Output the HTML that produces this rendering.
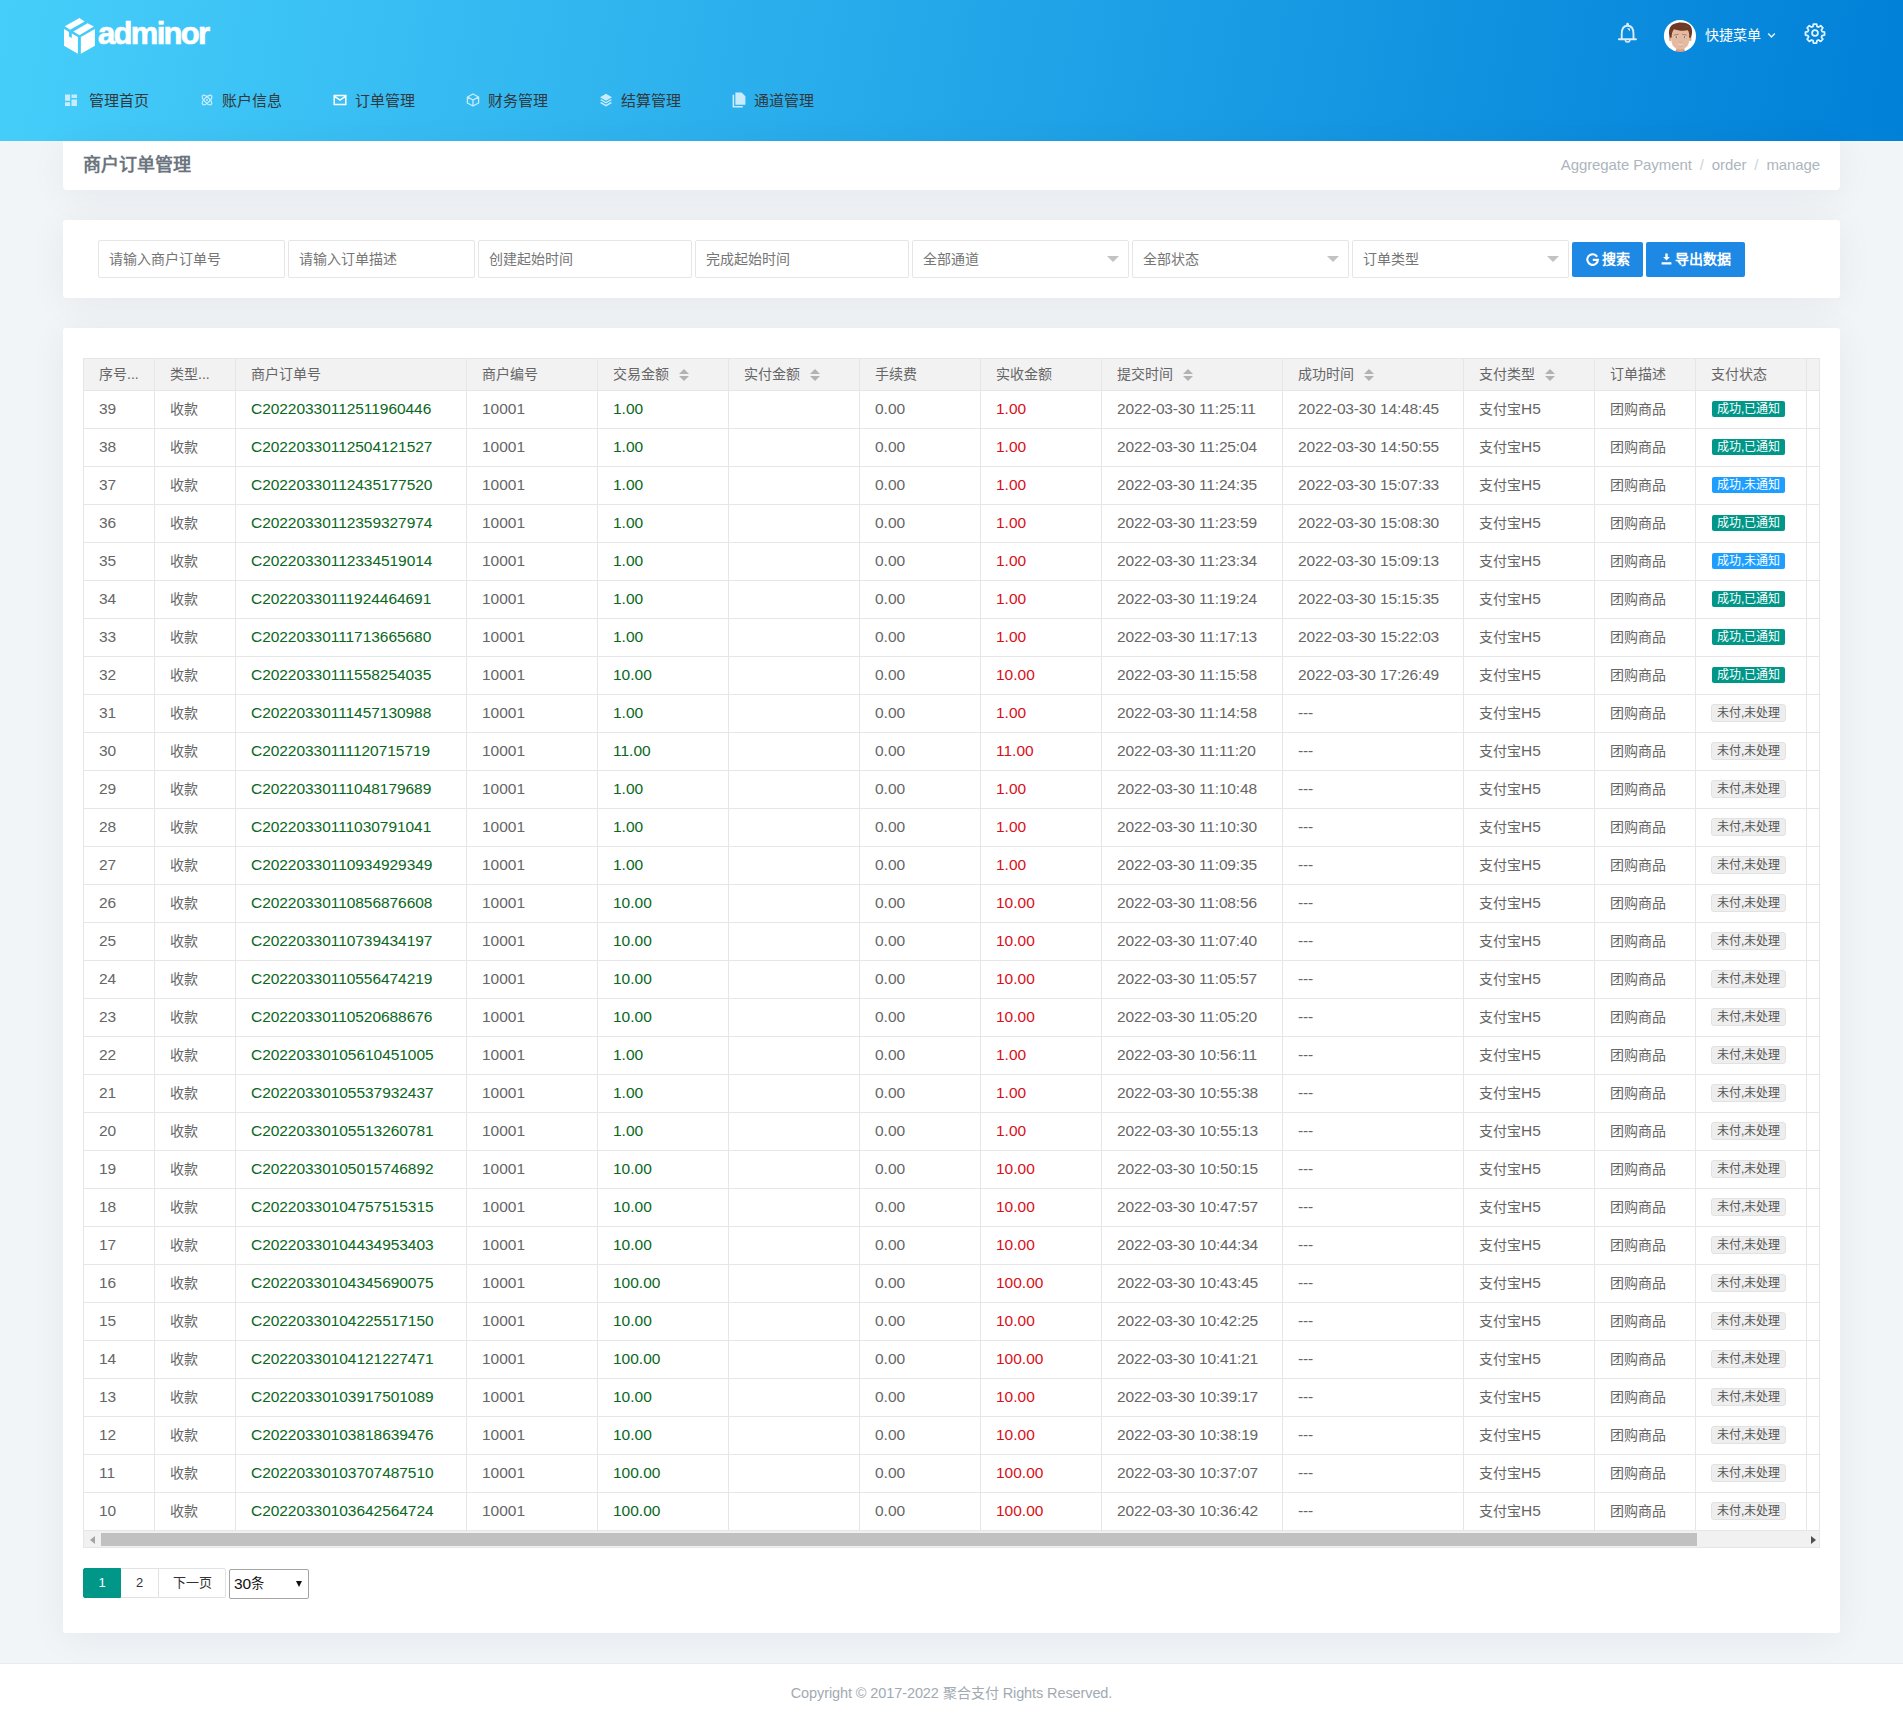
<!DOCTYPE html>
<html lang="zh-CN">
<head>
<meta charset="utf-8">
<title>商户订单管理</title>
<style>
*{box-sizing:border-box}
html,body{margin:0;padding:0}
body{width:1903px;height:1723px;position:relative;overflow:hidden;background:#f1f5f8;
  font-family:"Liberation Sans",sans-serif;font-size:14px;color:#666;}
.abs{position:absolute}
/* header */
#hdr{position:absolute;left:0;top:0;width:1903px;height:141px;
  background:linear-gradient(100deg,#46cefa 0%,#0180d8 100%);}
#logo-ic{position:absolute;left:63px;top:17px;width:33px;height:38px}
#logo-tx{position:absolute;left:98px;top:14px;font-weight:bold;font-size:31px;line-height:40px;color:#fff;letter-spacing:-1.7px;white-space:nowrap;-webkit-text-stroke:.7px #fff}
.nav{position:absolute;top:90px;height:22px;line-height:22px;font-size:15px;color:#33383c;white-space:nowrap}
.nav svg{position:absolute;top:3.3px;left:-22.5px;width:14px;height:14px;overflow:visible}
.nav.first svg{left:-25px}
#user-tx{position:absolute;left:1705px;top:25px;line-height:20px;font-size:14px;color:#fff;white-space:nowrap}
/* cards */
.card{position:absolute;left:63px;width:1777px;background:#fff;border-radius:3px;
  box-shadow:0 5px 38px rgba(20,25,30,.054);}
#bc{top:141px;height:49px;border-radius:0 0 4px 4px}
#bc h4{position:absolute;left:20px;top:12px;margin:0;font-size:18px;line-height:24px;font-weight:bold;color:#6c757d}
#crumb{position:absolute;right:20px;top:13px;font-size:15px;line-height:22px;color:#adb5bd;white-space:nowrap;letter-spacing:-.1px}
#crumb i{font-style:normal;color:#ced4da;padding:0 8px}
#flt{top:220px;height:78px}
.inp{position:absolute;top:20px;height:38px;border:1px solid #e6e6e6;border-radius:2px;background:#fff;
  line-height:36px;padding-left:10px;font-size:14px;color:#757575;white-space:nowrap}
.sel:after{content:"";position:absolute;right:9px;top:15px;border:6px solid transparent;border-top-color:#c2c2c2;border-bottom-width:0}
.btn{position:absolute;top:22px;height:35px;border-radius:2px;background:#1e88e5;color:#fff;font-size:14px;line-height:35px;text-align:center;font-weight:bold;white-space:nowrap}
#tb{top:328px;height:1305px}
/* table */
#tw{position:absolute;left:20px;top:30px;width:1737px;height:1190px;border:1px solid #e6e6e6;overflow:hidden;background:#fff}
table{border-collapse:separate;border-spacing:0;table-layout:fixed;width:1736px;position:absolute;left:0;top:0}
th,td{border-right:1px solid #e6e6e6;border-bottom:1px solid #e6e6e6;padding:0 0 2px 15px;text-align:left;
  white-space:nowrap;overflow:hidden;font-weight:normal;font-size:14px;color:#666}
th{height:32px;background:#f2f2f2;line-height:20px;position:relative;vertical-align:middle}
td{height:38px;line-height:20px;vertical-align:middle}
td.d,span.d{font-size:15.5px}
td.on{letter-spacing:-.05px}
td.dt{letter-spacing:-.15px}
td.gr{color:#0a671d}
td.rd{color:#d8101a}
th.last,td.last{border-right:0;padding:0}
.srt{display:inline-block;position:relative;width:10px;height:14px;margin-left:10px;vertical-align:-3px}
.srt:before,.srt:after{content:"";position:absolute;left:0;border:5px solid transparent}
.srt:before{top:-4px;border-bottom-color:#b2b2b2}
.srt:after{top:8px;border-top-color:#b2b2b2}
.bd{display:inline-block;height:16px;line-height:16px;padding:0 5px;font-size:12px;border-radius:2px;color:#fff;vertical-align:top;margin:2px 1px 0 1px}
.bg{background:#009688}
.bb{background:#1e9fff}
.bn{background:#eee;color:#555;border:1px solid #e2e2e2;height:18px;line-height:16px;margin:1px 0 0 0;border-radius:3px;padding:0 5px}
/* scrollbar */
#sb{position:absolute;left:0;top:1172px;width:1735px;height:16px;background:#f1f1f1}
#sb .th{position:absolute;left:17px;top:2px;width:1596px;height:13px;background:#c1c1c1}
#sb .la,#sb .ra{position:absolute;top:5px;border:4px solid transparent}
#sb .la{left:6px;border-right-color:#a3a3a3;border-left-width:0;border-right-width:5px}
#sb .ra{right:3px;border-left-color:#505050;border-right-width:0;border-left-width:5px}
/* pager */
.pg{position:absolute;top:1240px;height:30px;line-height:28px;border:1px solid #e2e2e2;background:#fff;font-size:13px;color:#333;text-align:center}
#pgsel{position:absolute;left:166px;top:1241px;width:80px;height:30px;border:1px solid #a3a3a3;border-radius:2px;background:#fff;color:#111;font-size:13.3px;line-height:28px;padding-left:4px}
#pgsel b{font-weight:normal;font-size:15.5px;vertical-align:-1px}
#pgsel:after{content:"";position:absolute;right:6px;top:11px;border:3.5px solid transparent;border-top:6px solid #111;border-bottom-width:0}
/* footer */
#ft{position:absolute;left:0;top:1663px;width:1903px;height:60px;background:#fff;border-top:1px solid #e9ecef;
  text-align:center;font-size:14.5px;line-height:59px;color:#a1aab2;letter-spacing:-.1px}
#ft span{display:inline-block}
</style>
</head>
<body>
<div id="hdr">
  <svg id="logo-ic" viewBox="0 0 33 38"><path fill="#fff" d="M1.83 9.35 L16.45 0.99 L21.61 4.47 L7.12 12.83 Z M10.32 14.5 L24.53 6.15 L30.94 9.49 L16.45 18.13 Z M0.99 12 L6 14.9 L6 19.52 L8.79 21.05 L8.79 16.52 L14.92 20.08 L14.92 36.8 L0.99 28.71 Z M17.85 20.08 L31.92 12 L31.92 28.71 L17.85 36.8 Z"/></svg>
  <div id="logo-tx">adminor</div>

  <div class="nav first" style="left:89px"><svg viewBox="0 0 14 14"><path fill="#c9ecfd" d="M1 1.6h5.1v6.2H1zM7.5 1.6H13v3.5H7.5zM7.5 6.6H13V13H7.5zM1 9.2H6.1V13H1z"/></svg>管理首页</div>
  <div class="nav" style="left:222px"><svg viewBox="0 0 14 14"><g fill="none" stroke="#c9ecfd" stroke-width="1.3"><ellipse cx="7" cy="7" rx="6.2" ry="2.6" transform="rotate(45 7 7)"/><ellipse cx="7" cy="7" rx="6.2" ry="2.6" transform="rotate(-45 7 7)"/></g><circle cx="7" cy="7" r="1" fill="#c9ecfd"/></svg>账户信息</div>
  <div class="nav" style="left:355px"><svg viewBox="0 0 14 14"><path fill="none" stroke="#fff" stroke-width="1.5" d="M1.2 2.6h11.6v8.8H1.2z M1.6 3.4 L7 7.2 L12.4 3.4"/></svg>订单管理</div>
  <div class="nav" style="left:488px"><svg viewBox="0 0 14 14"><path fill="none" stroke="#c9ecfd" stroke-width="1.3" stroke-linejoin="round" d="M7 1 L12.6 4 V10 L7 13 L1.4 10 V4 Z M1.6 4.1 L7 7 L12.4 4.1 M7 7 V13"/></svg>财务管理</div>
  <div class="nav" style="left:621px"><svg viewBox="0 0 14 14"><path fill="#c9ecfd" d="M7 0.8 L13 4.3 L7 7.8 L1 4.3 Z M2.3 6.3 L7 9 L11.7 6.3 L13 7.1 L7 10.6 L1 7.1 Z M2.3 9.1 L7 11.8 L11.7 9.1 L13 9.9 L7 13.4 L1 9.9 Z"/></svg>结算管理</div>
  <div class="nav" style="left:754px"><svg viewBox="0 0 14 14"><path fill="#c9ecfd" d="M3.4 -0.6 H9.6 L13.4 3.2 V11.8 H3.4 Z M0.6 1.8 H2.2 V13 H10.8 V14.4 H0.6 Z"/></svg>通道管理</div>

  <svg class="abs" style="left:1605px;top:10px;width:100px;height:50px" viewBox="0 0 1903 952">
    <g fill="none" stroke="#dcecfa" stroke-width="36" stroke-linecap="round" stroke-linejoin="round">
      <path d="M318 545 V455 C318 350 365 300 430 300 C495 300 542 350 542 455 V545"/>
      <path d="M262 557 H590" stroke-width="34"/>
      <path d="M388 580 A44 44 0 0 0 472 580" stroke-width="30"/>
    </g>
    <circle cx="430" cy="270" r="26" fill="#dcecfa"/>
    <path d="M420 345 L478 350 L472 410 Z" fill="#dcecfa"/>
    <defs><clipPath id="cp"><circle cx="1427" cy="495" r="306"/></clipPath></defs>
    <circle cx="1427" cy="495" r="306" fill="#fff"/>
    <g clip-path="url(#cp)">
      <rect x="1355" y="690" width="155" height="130" fill="#d6a489"/>
      <path d="M1290 800 L1355 770 L1430 800 L1510 770 L1570 800 V830 H1290Z" fill="#6a66b0"/>
      <path d="M1375 780 L1430 800 L1490 780 L1480 830 H1385Z" fill="#f7a45e"/>
      <ellipse cx="1243" cy="548" rx="26" ry="48" fill="#dcab90"/><ellipse cx="1622" cy="548" rx="26" ry="48" fill="#dcab90"/>
      <path d="M1262 330 V565 C1262 690 1345 745 1432 748 C1520 745 1603 690 1603 565 V330 Z" fill="#e6b9a1"/>
      <path d="M1232 530 C1200 400 1225 305 1300 270 C1400 218 1560 225 1620 295 C1672 355 1662 450 1636 530 L1598 525 C1608 470 1600 420 1578 385 C1480 405 1380 388 1312 365 C1280 405 1266 465 1270 525 Z" fill="#6d3a25"/>
      <path d="M1500 320 C1540 300 1580 310 1600 340 C1570 325 1535 325 1500 320Z" fill="#8a4a30"/>
      <path d="M1312 478 L1400 462 M1468 462 L1556 478" stroke="#9a6a52" stroke-width="14" fill="none"/>
      <ellipse cx="1357" cy="516" rx="36" ry="17" fill="#efe6e0"/><ellipse cx="1513" cy="516" rx="36" ry="17" fill="#efe6e0"/>
      <circle cx="1357" cy="516" r="17" fill="#6b6459"/><circle cx="1513" cy="516" r="17" fill="#6b6459"/>
      <path d="M1415 600 Q1435 625 1455 600" stroke="#d09c84" stroke-width="10" fill="none"/>
      <rect x="1388" y="648" width="94" height="20" rx="10" fill="#ddd3d6"/>
      <path d="M1395 690 Q1435 705 1475 690" stroke="#d3a088" stroke-width="8" fill="none"/>
    </g>
  </svg>

  
  <div id="user-tx">快捷菜单</div>
  <svg class="abs" style="left:1766.5px;top:31.7px;width:9px;height:7px" viewBox="0 0 9 7"><path d="M1.2 1.6 L4.5 4.9 L7.8 1.6" fill="none" stroke="#e6f5ff" stroke-width="1.4"/></svg>
  <svg class="abs" style="left:1804px;top:21.5px;width:22px;height:22px" viewBox="0 0 24 24"><g fill="none" stroke="#e3f4ff" stroke-width="1.9" stroke-linejoin="round"><circle cx="12" cy="12" r="3.2"/><path d="M10.3 2.2h3.4l.5 2.7 1.7.7 2.3-1.6 2.4 2.4-1.6 2.3.7 1.7 2.7.5v3.4l-2.7.5-.7 1.7 1.6 2.3-2.4 2.4-2.3-1.6-1.7.7-.5 2.7h-3.4l-.5-2.7-1.7-.7-2.3 1.6-2.4-2.4 1.6-2.3-.7-1.7-2.7-.5v-3.4l2.7-.5.7-1.7-1.6-2.3 2.4-2.4 2.3 1.6 1.7-.7z"/></g></svg>
</div>

<div class="card" id="bc">
  <h4>商户订单管理</h4>
  <div id="crumb">Aggregate Payment<i>/</i>order<i>/</i>manage</div>
</div>

<div class="card" id="flt">
  <div class="inp" style="left:35px;width:187px">请输入商户订单号</div>
  <div class="inp" style="left:225px;width:187px">请输入订单描述</div>
  <div class="inp" style="left:415px;width:214px">创建起始时间</div>
  <div class="inp" style="left:632px;width:214px">完成起始时间</div>
  <div class="inp sel" style="left:849px;width:217px">全部通道</div>
  <div class="inp sel" style="left:1069px;width:217px">全部状态</div>
  <div class="inp sel" style="left:1289px;width:217px">订单类型</div>
  <div class="btn" style="left:1509px;width:71px"><svg style="width:13px;height:13px;vertical-align:-2px;margin-right:3px" viewBox="0 0 13 13"><path fill="none" stroke="#fff" stroke-width="2.1" d="M11.1 3.7 A5.3 5.3 0 1 0 11.9 6.9 H6.8"/></svg>搜索</div>
  <div class="btn" style="left:1583px;width:99px"><svg style="width:11px;height:12px;vertical-align:-1px;margin-right:3px" viewBox="0 0 11 12"><path fill="#fff" d="M4.3 0.5h2.4v3.4h2.2L5.5 7.4 2.1 3.9h2.2zM0.6 9.2h9.8v2.2H0.6z"/></svg>导出数据</div>
</div>

<div class="card" id="tb">
  <div id="tw">
    <table>
      <colgroup><col style="width:71px"><col style="width:81px"><col style="width:231px"><col style="width:131px"><col style="width:131px"><col style="width:131px"><col style="width:121px"><col style="width:121px"><col style="width:181px"><col style="width:181px"><col style="width:131px"><col style="width:101px"><col style="width:111px"><col style="width:13px"></colgroup>
      <thead><tr>
        <th>序号...</th><th>类型...</th><th>商户订单号</th><th>商户编号</th><th>交易金额<span class="srt"></span></th><th>实付金额<span class="srt"></span></th><th>手续费</th><th>实收金额</th><th>提交时间<span class="srt"></span></th><th>成功时间<span class="srt"></span></th><th>支付类型<span class="srt"></span></th><th>订单描述</th><th>支付状态</th><th class="last"></th>
      </tr></thead>
      <tbody>
<tr><td class="d">39</td><td>收款</td><td class="d gr on">C20220330112511960446</td><td class="d">10001</td><td class="d gr">1.00</td><td></td><td class="d">0.00</td><td class="d rd">1.00</td><td class="d dt">2022-03-30 11:25:11</td><td class="d dt">2022-03-30 14:48:45</td><td>支付宝<span class="d">H5</span></td><td>团购商品</td><td><span class="bd bg">成功,已通知</span></td><td class="last"></td></tr>
<tr><td class="d">38</td><td>收款</td><td class="d gr on">C20220330112504121527</td><td class="d">10001</td><td class="d gr">1.00</td><td></td><td class="d">0.00</td><td class="d rd">1.00</td><td class="d dt">2022-03-30 11:25:04</td><td class="d dt">2022-03-30 14:50:55</td><td>支付宝<span class="d">H5</span></td><td>团购商品</td><td><span class="bd bg">成功,已通知</span></td><td class="last"></td></tr>
<tr><td class="d">37</td><td>收款</td><td class="d gr on">C20220330112435177520</td><td class="d">10001</td><td class="d gr">1.00</td><td></td><td class="d">0.00</td><td class="d rd">1.00</td><td class="d dt">2022-03-30 11:24:35</td><td class="d dt">2022-03-30 15:07:33</td><td>支付宝<span class="d">H5</span></td><td>团购商品</td><td><span class="bd bb">成功,未通知</span></td><td class="last"></td></tr>
<tr><td class="d">36</td><td>收款</td><td class="d gr on">C20220330112359327974</td><td class="d">10001</td><td class="d gr">1.00</td><td></td><td class="d">0.00</td><td class="d rd">1.00</td><td class="d dt">2022-03-30 11:23:59</td><td class="d dt">2022-03-30 15:08:30</td><td>支付宝<span class="d">H5</span></td><td>团购商品</td><td><span class="bd bg">成功,已通知</span></td><td class="last"></td></tr>
<tr><td class="d">35</td><td>收款</td><td class="d gr on">C20220330112334519014</td><td class="d">10001</td><td class="d gr">1.00</td><td></td><td class="d">0.00</td><td class="d rd">1.00</td><td class="d dt">2022-03-30 11:23:34</td><td class="d dt">2022-03-30 15:09:13</td><td>支付宝<span class="d">H5</span></td><td>团购商品</td><td><span class="bd bb">成功,未通知</span></td><td class="last"></td></tr>
<tr><td class="d">34</td><td>收款</td><td class="d gr on">C20220330111924464691</td><td class="d">10001</td><td class="d gr">1.00</td><td></td><td class="d">0.00</td><td class="d rd">1.00</td><td class="d dt">2022-03-30 11:19:24</td><td class="d dt">2022-03-30 15:15:35</td><td>支付宝<span class="d">H5</span></td><td>团购商品</td><td><span class="bd bg">成功,已通知</span></td><td class="last"></td></tr>
<tr><td class="d">33</td><td>收款</td><td class="d gr on">C20220330111713665680</td><td class="d">10001</td><td class="d gr">1.00</td><td></td><td class="d">0.00</td><td class="d rd">1.00</td><td class="d dt">2022-03-30 11:17:13</td><td class="d dt">2022-03-30 15:22:03</td><td>支付宝<span class="d">H5</span></td><td>团购商品</td><td><span class="bd bg">成功,已通知</span></td><td class="last"></td></tr>
<tr><td class="d">32</td><td>收款</td><td class="d gr on">C20220330111558254035</td><td class="d">10001</td><td class="d gr">10.00</td><td></td><td class="d">0.00</td><td class="d rd">10.00</td><td class="d dt">2022-03-30 11:15:58</td><td class="d dt">2022-03-30 17:26:49</td><td>支付宝<span class="d">H5</span></td><td>团购商品</td><td><span class="bd bg">成功,已通知</span></td><td class="last"></td></tr>
<tr><td class="d">31</td><td>收款</td><td class="d gr on">C20220330111457130988</td><td class="d">10001</td><td class="d gr">1.00</td><td></td><td class="d">0.00</td><td class="d rd">1.00</td><td class="d dt">2022-03-30 11:14:58</td><td class="d dt">---</td><td>支付宝<span class="d">H5</span></td><td>团购商品</td><td><span class="bd bn">未付,未处理</span></td><td class="last"></td></tr>
<tr><td class="d">30</td><td>收款</td><td class="d gr on">C20220330111120715719</td><td class="d">10001</td><td class="d gr">11.00</td><td></td><td class="d">0.00</td><td class="d rd">11.00</td><td class="d dt">2022-03-30 11:11:20</td><td class="d dt">---</td><td>支付宝<span class="d">H5</span></td><td>团购商品</td><td><span class="bd bn">未付,未处理</span></td><td class="last"></td></tr>
<tr><td class="d">29</td><td>收款</td><td class="d gr on">C20220330111048179689</td><td class="d">10001</td><td class="d gr">1.00</td><td></td><td class="d">0.00</td><td class="d rd">1.00</td><td class="d dt">2022-03-30 11:10:48</td><td class="d dt">---</td><td>支付宝<span class="d">H5</span></td><td>团购商品</td><td><span class="bd bn">未付,未处理</span></td><td class="last"></td></tr>
<tr><td class="d">28</td><td>收款</td><td class="d gr on">C20220330111030791041</td><td class="d">10001</td><td class="d gr">1.00</td><td></td><td class="d">0.00</td><td class="d rd">1.00</td><td class="d dt">2022-03-30 11:10:30</td><td class="d dt">---</td><td>支付宝<span class="d">H5</span></td><td>团购商品</td><td><span class="bd bn">未付,未处理</span></td><td class="last"></td></tr>
<tr><td class="d">27</td><td>收款</td><td class="d gr on">C20220330110934929349</td><td class="d">10001</td><td class="d gr">1.00</td><td></td><td class="d">0.00</td><td class="d rd">1.00</td><td class="d dt">2022-03-30 11:09:35</td><td class="d dt">---</td><td>支付宝<span class="d">H5</span></td><td>团购商品</td><td><span class="bd bn">未付,未处理</span></td><td class="last"></td></tr>
<tr><td class="d">26</td><td>收款</td><td class="d gr on">C20220330110856876608</td><td class="d">10001</td><td class="d gr">10.00</td><td></td><td class="d">0.00</td><td class="d rd">10.00</td><td class="d dt">2022-03-30 11:08:56</td><td class="d dt">---</td><td>支付宝<span class="d">H5</span></td><td>团购商品</td><td><span class="bd bn">未付,未处理</span></td><td class="last"></td></tr>
<tr><td class="d">25</td><td>收款</td><td class="d gr on">C20220330110739434197</td><td class="d">10001</td><td class="d gr">10.00</td><td></td><td class="d">0.00</td><td class="d rd">10.00</td><td class="d dt">2022-03-30 11:07:40</td><td class="d dt">---</td><td>支付宝<span class="d">H5</span></td><td>团购商品</td><td><span class="bd bn">未付,未处理</span></td><td class="last"></td></tr>
<tr><td class="d">24</td><td>收款</td><td class="d gr on">C20220330110556474219</td><td class="d">10001</td><td class="d gr">10.00</td><td></td><td class="d">0.00</td><td class="d rd">10.00</td><td class="d dt">2022-03-30 11:05:57</td><td class="d dt">---</td><td>支付宝<span class="d">H5</span></td><td>团购商品</td><td><span class="bd bn">未付,未处理</span></td><td class="last"></td></tr>
<tr><td class="d">23</td><td>收款</td><td class="d gr on">C20220330110520688676</td><td class="d">10001</td><td class="d gr">10.00</td><td></td><td class="d">0.00</td><td class="d rd">10.00</td><td class="d dt">2022-03-30 11:05:20</td><td class="d dt">---</td><td>支付宝<span class="d">H5</span></td><td>团购商品</td><td><span class="bd bn">未付,未处理</span></td><td class="last"></td></tr>
<tr><td class="d">22</td><td>收款</td><td class="d gr on">C20220330105610451005</td><td class="d">10001</td><td class="d gr">1.00</td><td></td><td class="d">0.00</td><td class="d rd">1.00</td><td class="d dt">2022-03-30 10:56:11</td><td class="d dt">---</td><td>支付宝<span class="d">H5</span></td><td>团购商品</td><td><span class="bd bn">未付,未处理</span></td><td class="last"></td></tr>
<tr><td class="d">21</td><td>收款</td><td class="d gr on">C20220330105537932437</td><td class="d">10001</td><td class="d gr">1.00</td><td></td><td class="d">0.00</td><td class="d rd">1.00</td><td class="d dt">2022-03-30 10:55:38</td><td class="d dt">---</td><td>支付宝<span class="d">H5</span></td><td>团购商品</td><td><span class="bd bn">未付,未处理</span></td><td class="last"></td></tr>
<tr><td class="d">20</td><td>收款</td><td class="d gr on">C20220330105513260781</td><td class="d">10001</td><td class="d gr">1.00</td><td></td><td class="d">0.00</td><td class="d rd">1.00</td><td class="d dt">2022-03-30 10:55:13</td><td class="d dt">---</td><td>支付宝<span class="d">H5</span></td><td>团购商品</td><td><span class="bd bn">未付,未处理</span></td><td class="last"></td></tr>
<tr><td class="d">19</td><td>收款</td><td class="d gr on">C20220330105015746892</td><td class="d">10001</td><td class="d gr">10.00</td><td></td><td class="d">0.00</td><td class="d rd">10.00</td><td class="d dt">2022-03-30 10:50:15</td><td class="d dt">---</td><td>支付宝<span class="d">H5</span></td><td>团购商品</td><td><span class="bd bn">未付,未处理</span></td><td class="last"></td></tr>
<tr><td class="d">18</td><td>收款</td><td class="d gr on">C20220330104757515315</td><td class="d">10001</td><td class="d gr">10.00</td><td></td><td class="d">0.00</td><td class="d rd">10.00</td><td class="d dt">2022-03-30 10:47:57</td><td class="d dt">---</td><td>支付宝<span class="d">H5</span></td><td>团购商品</td><td><span class="bd bn">未付,未处理</span></td><td class="last"></td></tr>
<tr><td class="d">17</td><td>收款</td><td class="d gr on">C20220330104434953403</td><td class="d">10001</td><td class="d gr">10.00</td><td></td><td class="d">0.00</td><td class="d rd">10.00</td><td class="d dt">2022-03-30 10:44:34</td><td class="d dt">---</td><td>支付宝<span class="d">H5</span></td><td>团购商品</td><td><span class="bd bn">未付,未处理</span></td><td class="last"></td></tr>
<tr><td class="d">16</td><td>收款</td><td class="d gr on">C20220330104345690075</td><td class="d">10001</td><td class="d gr">100.00</td><td></td><td class="d">0.00</td><td class="d rd">100.00</td><td class="d dt">2022-03-30 10:43:45</td><td class="d dt">---</td><td>支付宝<span class="d">H5</span></td><td>团购商品</td><td><span class="bd bn">未付,未处理</span></td><td class="last"></td></tr>
<tr><td class="d">15</td><td>收款</td><td class="d gr on">C20220330104225517150</td><td class="d">10001</td><td class="d gr">10.00</td><td></td><td class="d">0.00</td><td class="d rd">10.00</td><td class="d dt">2022-03-30 10:42:25</td><td class="d dt">---</td><td>支付宝<span class="d">H5</span></td><td>团购商品</td><td><span class="bd bn">未付,未处理</span></td><td class="last"></td></tr>
<tr><td class="d">14</td><td>收款</td><td class="d gr on">C20220330104121227471</td><td class="d">10001</td><td class="d gr">100.00</td><td></td><td class="d">0.00</td><td class="d rd">100.00</td><td class="d dt">2022-03-30 10:41:21</td><td class="d dt">---</td><td>支付宝<span class="d">H5</span></td><td>团购商品</td><td><span class="bd bn">未付,未处理</span></td><td class="last"></td></tr>
<tr><td class="d">13</td><td>收款</td><td class="d gr on">C20220330103917501089</td><td class="d">10001</td><td class="d gr">10.00</td><td></td><td class="d">0.00</td><td class="d rd">10.00</td><td class="d dt">2022-03-30 10:39:17</td><td class="d dt">---</td><td>支付宝<span class="d">H5</span></td><td>团购商品</td><td><span class="bd bn">未付,未处理</span></td><td class="last"></td></tr>
<tr><td class="d">12</td><td>收款</td><td class="d gr on">C20220330103818639476</td><td class="d">10001</td><td class="d gr">10.00</td><td></td><td class="d">0.00</td><td class="d rd">10.00</td><td class="d dt">2022-03-30 10:38:19</td><td class="d dt">---</td><td>支付宝<span class="d">H5</span></td><td>团购商品</td><td><span class="bd bn">未付,未处理</span></td><td class="last"></td></tr>
<tr><td class="d">11</td><td>收款</td><td class="d gr on">C20220330103707487510</td><td class="d">10001</td><td class="d gr">100.00</td><td></td><td class="d">0.00</td><td class="d rd">100.00</td><td class="d dt">2022-03-30 10:37:07</td><td class="d dt">---</td><td>支付宝<span class="d">H5</span></td><td>团购商品</td><td><span class="bd bn">未付,未处理</span></td><td class="last"></td></tr>
<tr><td class="d">10</td><td>收款</td><td class="d gr on">C20220330103642564724</td><td class="d">10001</td><td class="d gr">100.00</td><td></td><td class="d">0.00</td><td class="d rd">100.00</td><td class="d dt">2022-03-30 10:36:42</td><td class="d dt">---</td><td>支付宝<span class="d">H5</span></td><td>团购商品</td><td><span class="bd bn">未付,未处理</span></td><td class="last"></td></tr>
      </tbody>
    </table>
    <div id="sb"><div class="la"></div><div class="th"></div><div class="ra"></div></div>
  </div>
  <div class="pg" style="left:20px;width:38px;background:#009688;border-color:#009688;color:#fff;border-radius:2px 0 0 2px">1</div>
  <div class="pg" style="left:58px;width:38px;border-left:0">2</div>
  <div class="pg" style="left:95px;width:68px;border-radius:0 2px 2px 0">下一页</div>
  <div id="pgsel"><b>30</b>条</div>
</div>

<div id="ft"><span id="fts">Copyright © 2017-2022 <i style="font-style:normal;font-size:14px;letter-spacing:0">聚合支付</i> Rights Reserved.</span></div>
</body>
</html>
